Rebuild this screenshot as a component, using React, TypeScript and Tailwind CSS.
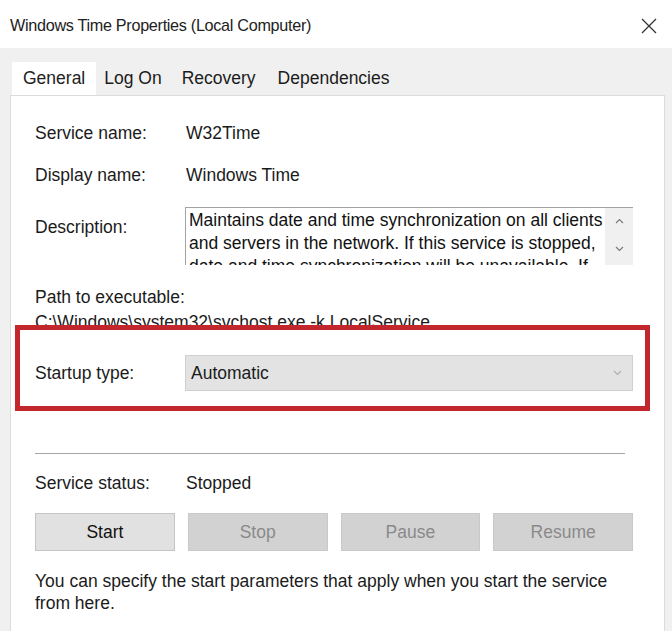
import React from "react";

function Chevron({ up, className }: { up?: boolean; className?: string }) {
  return (
    <svg width="9" height="6" viewBox="0 0 9 6" className={className}>
      <path
        d={up ? "M1 5 L4.5 1.5 L8 5" : "M1 1 L4.5 4.5 L8 1"}
        fill="none"
        stroke="currentColor"
        strokeWidth="1.2"
      />
    </svg>
  );
}

export default function App() {
  return (
    <div className="w-[672px] h-[631px] overflow-hidden bg-white flex flex-col font-['Liberation_Sans',Arial,sans-serif] text-[17.5px] text-[#1b1b1b]">
      {/* Title bar */}
      <div className="h-[48px] shrink-0 flex items-center justify-between pl-[10px] pr-[15px] pt-[3px]">
        <span className="text-[16.2px] tracking-[-0.3px] text-[#222]">Windows Time Properties (Local Computer)</span>
        <svg width="16" height="16" viewBox="0 0 16 16">
          <path d="M1 1 L15 15 M15 1 L1 15" stroke="#333" strokeWidth="1.3" fill="none" />
        </svg>
      </div>

      {/* Body */}
      <div className="flex-1 bg-[#f0f0f0] pl-[10px] pr-[7px] pt-[14px] flex flex-col">
        {/* Tabs */}
        <div className="flex h-[33px] items-stretch pl-[2px]">
          <div className="bg-white flex items-center px-[11px] text-[#222]">General</div>
          <div className="flex items-center pl-[8px] pr-[10px]">Log On</div>
          <div className="flex items-center px-[10px]">Recovery</div>
          <div className="flex items-center px-[12px]">Dependencies</div>
        </div>

        {/* Panel */}
        <div className="flex-1 bg-white border-t border-l border-r border-[#dcdcdc] pl-[24px] pt-[16px] flex flex-col leading-[23px]">
          <div className="h-[42px] flex items-center">
            <span className="w-[151px]">Service name:</span>
            <span>W32Time</span>
          </div>
          <div className="h-[42px] flex items-center">
            <span className="w-[151px]">Display name:</span>
            <span>Windows Time</span>
          </div>

          {/* Description */}
          <div className="mt-[11px] flex">
            <span className="w-[150px] mt-[9px]">Description:</span>
            <div className="w-[448px] h-[58px] overflow-hidden flex border-t border-l border-[#a3a3a3]">
              <div className="flex-1 pl-[3px] pt-[1px] text-[#111] whitespace-nowrap overflow-hidden">
                <div>Maintains date and time synchronization on all clients</div>
                <div>and servers in the network. If this service is stopped,</div>
                <div>date and time synchronization will be unavailable. If</div>
              </div>
              <div className="w-[28px] shrink-0 bg-[#f0f0f0] flex flex-col items-center pt-[10px] text-[#7a7a7a]">
                <Chevron up />
                <div className="h-[22px]" />
                <Chevron />
              </div>
            </div>
          </div>

          {/* Path */}
          <div className="mt-[21px]">Path to executable:</div>
          <div className="h-[16px] overflow-hidden">
            <div className="pt-[2px] whitespace-nowrap">C:\Windows\system32\svchost.exe -k LocalService</div>
          </div>

          {/* Startup type (highlighted) */}
          <div className="ml-[-20px] w-[635px] h-[86px] border-[5px] border-[#c3272e] bg-white flex items-start pl-[15px] pr-[12px] pt-[25px]">
            <span className="w-[150px] h-[36px] flex items-center">Startup type:</span>
            <div className="flex-1 h-[36px] bg-[#e3e3e3] border border-[#d0d0d0] flex items-center justify-between pl-[5px] pr-[10px]">
              <span>Automatic</span>
              <Chevron className="text-[#b0b0b0]" />
            </div>
          </div>

          {/* Separator */}
          <div className="mt-[42px] w-[590px] h-px bg-[#a6a6a6]" />

          <div className="mt-[18px] flex">
            <span className="w-[151px]">Service status:</span>
            <span>Stopped</span>
          </div>

          <div className="mt-[18px] w-[598px] grid grid-cols-4 gap-[13px]">
            <div className="h-[38px] bg-[#e1e1e1] border border-[#c4c4c4] flex items-center justify-center text-[#111]">Start</div>
            <div className="h-[38px] bg-[#d2d2d2] border border-[#c8c8c8] flex items-center justify-center text-[#8a8a8a]">Stop</div>
            <div className="h-[38px] bg-[#d2d2d2] border border-[#c8c8c8] flex items-center justify-center text-[#8a8a8a]">Pause</div>
            <div className="h-[38px] bg-[#d2d2d2] border border-[#c8c8c8] flex items-center justify-center text-[#8a8a8a]">Resume</div>
          </div>

          <div className="mt-[19px] leading-[22px] w-[600px]">
            You can specify the start parameters that apply when you start the service from here.
          </div>
        </div>
      </div>
    </div>
  );
}
